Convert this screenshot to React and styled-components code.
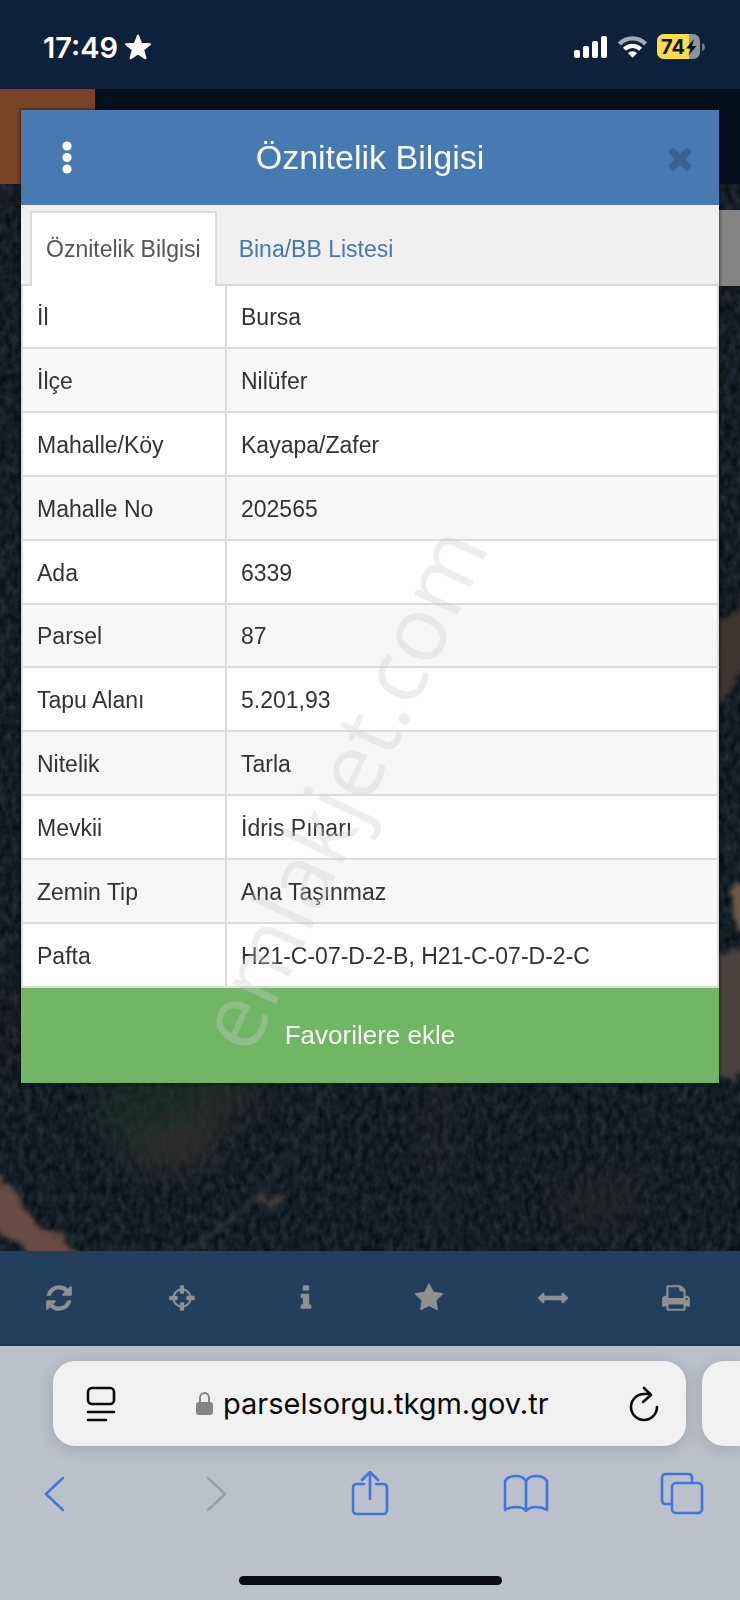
import React from 'react'
import styled, { createGlobalStyle } from 'styled-components';

const GlobalStyle = createGlobalStyle`
    * {
        box-sizing: border-box;
    }
    body {
        margin: 0;
        font-family: "Liberation Sans", Arial, sans-serif;
        font-size: 23px;
        color: #333;
        background-color: #bbc1cb;
    }
    button, input {
        font: inherit;
        color: inherit;
        border: none;
        padding: 0;
        margin: 0;
        background: none;
    }
    button {
        cursor: pointer;
    }
    svg {
        display: block;
        flex: none;
    }
`
const Page = styled.div`
    position: relative;
    min-height: 100vh;
    display: flex;
    flex-direction: column;
    overflow: hidden;
`

/* phone status bar */
const StatusBar = styled.header`
    height: 89px;
    padding: 5px 35px 0 43px;
    display: flex;
    align-items: center;
    justify-content: space-between;
    background-color: #0d223a;
    color: white;
`
const StatusGroup = styled.div`
    display: flex;
    align-items: center;
    gap: ${props => props.gap}px;
`
const Clock = styled.span`
    font-family: Inter, sans-serif;
    font-size: 29px;
    font-weight: 600;
`

/* map page behind the dialog */
const Stage = styled.main`
    flex: 1;
    display: grid;
`
const Site = styled.div`
    grid-area: 1 / 1;
    display: flex;
    flex-direction: column;
`
const SiteHeader = styled.div`
    height: 95px;
    background-color: #020f1c;
`
const MenuButton = styled.button`
    display: block;
    width: 95px;
    height: 95px;
    background-color: #7a4227;
`
const MapArea = styled.div`
    flex: 1;
    position: relative;
    background-color: #151e27;
`
const MapImage = styled.svg`
    position: absolute;
    width: 100%;
    height: 100%;
`
const LayerButton = styled.button`
    position: absolute;
    top: 26px;
    right: 0;
    width: 76px;
    height: 76px;
    background-color: #838383;
`

/* dialog */
const Dialog = styled.section`
    grid-area: 1 / 1;
    position: relative;
    align-self: start;
    margin: 21px 21px 168px;
    background-color: white;
    box-shadow: 0 0 3px 1px rgba(0, 0, 0, 0.5);
`
const DialogHeader = styled.div`
    height: 95px;
    display: flex;
    align-items: center;
    justify-content: space-between;
    background-color: #4879b0;
    color: #f5fbff;
`
const Title = styled.h1`
    margin: 0;
    font-size: 34px;
    font-weight: normal;
`
const HeaderButton = styled.button`
    width: 92px;
    height: 95px;
    padding-left: ${props => props.dim ? 14 : 0}px;
    display: flex;
    align-items: center;
    justify-content: center;
    color: ${props => props.dim ? '#3b6391' : 'white'};
`
const Tabs = styled.div`
    height: 81px;
    padding: 6px 9px 0;
    display: flex;
    background-color: #f0f0f0;
    border-bottom: 2px solid #d8d8d8;
`
const Tab = styled.button`
    height: 75px;
    padding: 0 ${props => props.active ? 14 : 20}px;
    border: 2px solid ${props => props.active ? '#dcdcdc' : 'transparent'};
    border-bottom: none;
    background-color: ${props => props.active ? 'white' : 'transparent'};
    color: ${props => props.active ? '#555' : '#4878a8'};
`
const Table = styled.table`
    width: 100%;
    height: 702px;
    border-collapse: collapse;
    border: 2px solid #dcdcdc;
    border-top: none;
`
const Row = styled.tr`
    background-color: ${props => props.shaded ? '#f7f7f7' : 'white'};
    border-bottom: 2px solid #dcdcdc;
`
const Name = styled.th`
    width: 204px;
    padding: 3px 14px 0;
    text-align: left;
    font-weight: normal;
    border-right: 2px solid #dcdcdc;
`
const Value = styled.td`
    padding: 3px 14px 0;
`
const FavoriteButton = styled.button`
    display: block;
    width: 100%;
    height: 95px;
    font-size: 26px;
    background-color: #72b566;
    color: #f6fff2;
`
const Watermark = styled.div`
    position: absolute;
    top: 677px;
    left: 318px;
    font-family: "Open Sans", sans-serif;
    font-size: 90px;
    line-height: 1;
    color: rgba(200, 205, 200, 0.35);
    transform: translate(-50%, -50%) rotate(-65deg);
    pointer-events: none;
`

/* site toolbar */
const Toolbar = styled.nav`
    height: 95px;
    padding: 0 40px 0 35px;
    display: flex;
    justify-content: space-between;
    background-color: #243f5b;
    border-bottom: 2px solid #1d3852;
`
const Tool = styled.button`
    width: 48px;
    display: flex;
    align-items: center;
    justify-content: center;
    color: #8e9192;
`

/* browser chrome */
const Browser = styled.footer`
    padding: 15px 0 16px;
    background-color: #bbc1cb;
`
const TabStrip = styled.div`
    display: grid;
    grid-template-columns: 1fr 38px;
    gap: 16px;
    padding-left: 53px;
`
const AddressBar = styled.div`
    height: 85px;
    padding: 0 27px 0 33px;
    display: flex;
    align-items: center;
    justify-content: space-between;
    border-radius: 22px;
    background-color: #f1f1f2;
    color: #0a0a0a;
    box-shadow: 0 3px 18px rgba(0, 0, 0, 0.15);
`
const NextTab = styled.div`
    border-radius: 22px 0 0 22px;
    background-color: #f1f1f2;
    box-shadow: 0 3px 18px rgba(0, 0, 0, 0.15);
`
const Address = styled.label`
    display: flex;
    align-items: center;
    gap: 10px;
`
const AddressInput = styled.input`
    width: 326px;
    font-family: Inter, sans-serif;
    font-size: 29px;
    outline: none;
`
const BrowserNav = styled.div`
    padding: 25px 34px 0 31px;
    display: flex;
    justify-content: space-between;
`
const NavButton = styled.button`
    height: 48px;
    color: ${props => props.disabled ? '#9a9da5' : '#4275dc'};
`
const HomeIndicator = styled.div`
    width: 263px;
    height: 9px;
    margin: 57px auto 0;
    border-radius: 5px;
    background-color: #0b0b12;
`

const icons = {
    refresh: 'M1639 1056q0 5-1 7-64 268-268 434.5t-478 166.5q-146 0-282.5-55t-243.5-157l-129 129q-19 19-45 19t-45-19-19-45v-448q0-26 19-45t45-19h448q26 0 45 19t19 45-19 45l-137 137q71 66 161 102t187 36q134 0 250-65t186-179q11-17 53-117 8-23 30-23h192q13 0 22.5 9.5t9.5 22.5zm25-800v448q0 26-19 45t-45 19h-448q-26 0-45-19t-19-45 19-45l138-138q-148-137-349-137-134 0-250 65t-186 179q-11 17-53 117-8 23-30 23h-199q-13 0-22.5-9.5t-9.5-22.5v-7q65-268 270-434.5t480-166.5q146 0 284 55.5t245 156.5l130-129q19-19 45-19t45 19 19 45z',
    locate: 'M1325 1024h-109q-26 0-45-19t-19-45v-128q0-26 19-45t45-19h109q-32-108-112.5-188.5t-188.5-112.5v109q0 26-19 45t-45 19h-128q-26 0-45-19t-19-45v-109q-108 32-188.5 112.5t-112.5 188.5h109q26 0 45 19t19 45v128q0 26-19 45t-45 19h-109q32 108 112.5 188.5t188.5 112.5v-109q0-26 19-45t45-19h128q26 0 45 19t19 45v109q108-32 188.5-112.5t112.5-188.5zm339-192v128q0 26-19 45t-45 19h-143q-37 161-154.5 278.5t-278.5 154.5v143q0 26-19 45t-45 19h-128q-26 0-45-19t-19-45v-143q-161-37-278.5-154.5t-154.5-278.5h-143q-26 0-45-19t-19-45v-128q0-26 19-45t45-19h143q37-161 154.5-278.5t278.5-154.5v-143q0-26 19-45t45-19h128q26 0 45 19t19 45v143q161 37 278.5 154.5t154.5 278.5h143q26 0 45 19t19 45z',
    info: 'M1216 1344v128q0 26-19 45t-45 19h-512q-26 0-45-19t-19-45v-128q0-26 19-45t45-19h64v-384h-64q-26 0-45-19t-19-45v-128q0-26 19-45t45-19h384q26 0 45 19t19 45v576h64q26 0 45 19t19 45zm-128-1152v192q0 26-19 45t-45 19h-256q-26 0-45-19t-19-45v-192q0-26 19-45t45-19h256q26 0 45 19t19 45z',
    star: 'M1728 647q0 22-26 48l-363 354 86 500q1 7 1 20 0 21-10.5 35.5t-30.5 14.5q-19 0-40-12l-449-236-449 236q-22 12-40 12-21 0-31.5-14.5t-10.5-35.5q0-6 2-20l86-500-364-354q-25-27-25-48 0-37 56-46l502-73 225-455q19-41 49-41t49 41l225 455 502 73q56 9 56 46z',
    measure: 'M1792 896q0 26-19 45l-256 256q-19 19-45 19t-45-19-19-45v-128h-1024v128q0 26-19 45t-45 19-45-19l-256-256q-19-19-19-45t19-45l256-256q19-19 45-19t45 19 19 45v128h1024v-128q0-26 19-45t45-19 45 19l256 256q19 19 19 45z',
    print: 'M448 1536h896v-256h-896v256zm0-640h896v-384h-160q-40 0-68-28t-28-68v-160h-640v640zm1152 64q0-26-19-45t-45-19-45 19-19 45 19 45 45 19 45-19 19-45zm128 0v416q0 13-9.5 22.5t-22.5 9.5h-224v160q0 40-28 68t-68 28h-960q-40 0-68-28t-28-68v-160h-224q-13 0-22.5-9.5t-9.5-22.5v-416q0-79 56.5-135.5t135.5-56.5h64v-544q0-40 28-68t68-28h672q40 0 88 20t76 48l152 152q28 28 48 76t20 88v256h64q79 0 135.5 56.5t56.5 135.5z',
    close: 'M1490 1322q0 40-28 68l-136 136q-28 28-68 28t-68-28l-294-294-294 294q-28 28-68 28t-68-28l-136-136q-28-28-28-68t28-68l294-294-294-294q-28-28-28-68t28-68l136-136q28-28 68-28t68 28l294 294 294-294q28-28 68-28t68 28l136 136q28 28 28 68t-28 68l-294 294 294 294q28 28 28 68z',
}

const tools = [
    ['refresh', 'Yenile'],
    ['locate', 'Konum'],
    ['info', 'Bilgi'],
    ['star', 'Favoriler'],
    ['measure', 'Ölçüm'],
    ['print', 'Yazdır'],
]

const attributes = [
    ['İl', 'Bursa'],
    ['İlçe', 'Nilüfer'],
    ['Mahalle/Köy', 'Kayapa/Zafer'],
    ['Mahalle No', '202565'],
    ['Ada', '6339'],
    ['Parsel', '87'],
    ['Tapu Alanı', '5.201,93'],
    ['Nitelik', 'Tarla'],
    ['Mevkii', 'İdris Pınarı'],
    ['Zemin Tip', 'Ana Taşınmaz'],
    ['Pafta', 'H21-C-07-D-2-B, H21-C-07-D-2-C'],
]

const Icon = ({ name, size = 30 }) => (
    <svg width={size} height={size} viewBox="0 0 1792 1792" fill="currentColor">
        <path d={icons[name]} />
    </svg>
)

const Signal = () => (
    <svg width="34" height="24" viewBox="0 0 34 24" fill="white">
        <rect x="0" y="15" width="6" height="8" rx="2" />
        <rect x="9" y="11" width="6" height="12" rx="2" />
        <rect x="18" y="6" width="6" height="17" rx="2" />
        <rect x="27" y="1" width="6" height="22" rx="2" />
    </svg>
)

const Wifi = () => (
    <svg width="31" height="24" viewBox="0 0 32 24" fill="none" strokeWidth="4.4">
        <path d="M2.5 8.800a19 19 0 0 1 27 0" stroke="#a3adb9" />
        <path d="M7.700 14.200a11.700 11.700 0 0 1 16.600 0" stroke="white" />
        <path d="M16 23.200l-4.800-4.900a6.800 6.800 0 0 1 9.600 0z" fill="white" />
    </svg>
)

const Battery = () => (
    <svg width="48" height="28" viewBox="0 0 48 28">
        <clipPath id="cell"><rect x="0" y="1" width="43" height="25" rx="7" /></clipPath>
        <g clipPath="url(#cell)">
            <path d="M0 0h48v28H0z" fill="#8e949c" />
            <path d="M0 0h32v28H0z" fill="#fadb4e" />
        </g>
        <path d="M45 10q3 1 3 4t-3 4z" fill="#717b88" />
        <text x="4" y="21" fontFamily="Inter, sans-serif" fontSize="20" fontWeight="700" fill="#14110a">74</text>
        <path d="M37 6l-8 9.500h4.500l-2 7 8-9.500h-4.500z" fill="#14110a" />
    </svg>
)

const SatelliteMap = () => (
    <MapImage viewBox="0 0 740 1067" preserveAspectRatio="xMidYMid slice" aria-hidden="true">
        <defs>
            <filter id="trees" x="0" y="0" width="100%" height="100%" colorInterpolationFilters="sRGB">
                <feTurbulence type="fractalNoise" baseFrequency="0.16 0.1" numOctaves="3" seed="8" />
                <feColorMatrix values="0.16 0 0 0 0  0.18 0 0 0 0.025  0.19 0 0 0 0.05  0 0 0 0 1" />
            </filter>
            <filter id="rough" x="-20%" y="-20%" width="140%" height="140%" colorInterpolationFilters="sRGB">
                <feTurbulence type="fractalNoise" baseFrequency="0.07" numOctaves="3" seed="3" />
                <feDisplacementMap in="SourceGraphic" scale="18" xChannelSelector="R" yChannelSelector="G" />
                <feGaussianBlur stdDeviation="2" />
            </filter>
            <filter id="haze" x="-30%" y="-30%" width="160%" height="160%" colorInterpolationFilters="sRGB">
                <feGaussianBlur stdDeviation="14" />
            </filter>
        </defs>
        <rect width="740" height="1067" filter="url(#trees)" />
        <g filter="url(#haze)">
            <path d="M90 905l100-20 40 30-20 60-90 10z" fill="#1c3528" opacity="0.6" />
            <path d="M130 950l80-20 10 50-70 10z" fill="#3a2f2b" opacity="0.6" />
            <path d="M200 890l80-5-40 50-30 10z" fill="#332c29" opacity="0.6" />
            <path d="M430 900l20 0-5 160-10 0z" fill="#2f2b27" opacity="0.5" />
            <path d="M560 1000l90-20-20 60-60 10z" fill="#2c2725" opacity="0.5" />
        </g>
        <g filter="url(#rough)">
            <path d="M-20 980l36 30 18 30 36 20 26 27H40l-20-26-30-22z" fill="#654b41" />
            <path d="M336 890l-30 47-32 50-18 28-58 45-60 22" fill="none" stroke="#3c3835" strokeWidth="3" opacity="0.8" />
            <path d="M256 1012l16 5 14-6" fill="none" stroke="#48403b" strokeWidth="5" />
            <path d="M715 440l40-20v60l-20 22-20 20z" fill="#40352f" />
            <path d="M700 774l60-10v130l-60-2z" fill="#4d423d" />
            <path d="M735 700h20v50h-20z" fill="#6c5a49" />
        </g>
    </MapImage>
)

const PageSettings = () => (
    <svg width="30" height="36" viewBox="0 0 30 36" fill="none" stroke="currentColor" strokeWidth="2.6" strokeLinecap="round">
        <rect x="2" y="2" width="26" height="16" rx="4" />
        <path d="M2 26h26M2 34h18" />
    </svg>
)

const Lock = () => (
    <svg width="17" height="25" viewBox="0 0 17 25">
        <path d="M4 12V7a4.500 5 0 0 1 9 0v5" fill="none" stroke="#858588" strokeWidth="2" />
        <rect x="0" y="11" width="17" height="13" rx="3" fill="#858588" />
    </svg>
)

const Reload = () => (
    <svg width="30" height="36" viewBox="0 0 30 36" fill="none" stroke="currentColor" strokeWidth="2.6" strokeLinecap="round" strokeLinejoin="round">
        <path d="M28 21A13 13 0 1 1 15 8h6" />
        <path d="M15 2l7 7-8 7" />
    </svg>
)

const NavIcon = ({ children }) => (
    <svg width="48" height="48" viewBox="0 0 48 48" fill="none" stroke="currentColor" strokeWidth="2.6" strokeLinecap="round" strokeLinejoin="round">
        {children}
    </svg>
)

const App = () => {
    return (
        <Page>
            <GlobalStyle />
            <StatusBar>
                <StatusGroup gap={6}>
                    <Clock>17:49</Clock>
                    <svg width="28" height="28" viewBox="0 0 28 28" fill="white" stroke="white" strokeWidth="2" strokeLinejoin="round">
                        <path d="M14 2.500l3.200 8.200 8.800.5-6.800 5.600 2.300 8.500L14 20.500l-7.500 4.800 2.300-8.500L2 11.200l8.800-.5z" />
                    </svg>
                </StatusGroup>
                <StatusGroup gap={9}>
                    <Signal />
                    <Wifi />
                    <Battery />
                </StatusGroup>
            </StatusBar>
            <Stage>
                <Site>
                    <SiteHeader>
                        <MenuButton aria-label="Menü" />
                    </SiteHeader>
                    <MapArea>
                        <SatelliteMap />
                        <LayerButton aria-label="Katmanlar" />
                    </MapArea>
                </Site>
                <Dialog>
                    <DialogHeader>
                        <HeaderButton aria-label="Seçenekler">
                            <svg width="10" height="34" viewBox="0 0 10 34" fill="currentColor">
                                <circle cx="5" cy="5" r="4.6" />
                                <circle cx="5" cy="16.5" r="4.6" />
                                <circle cx="5" cy="28" r="4.6" />
                            </svg>
                        </HeaderButton>
                        <Title>Öznitelik Bilgisi</Title>
                        <HeaderButton dim="true" aria-label="Kapat">
                            <Icon name="close" size={34} />
                        </HeaderButton>
                    </DialogHeader>
                    <Tabs role="tablist">
                        <Tab role="tab" aria-selected="true" active="true">Öznitelik Bilgisi</Tab>
                        <Tab role="tab" aria-selected="false">Bina/BB Listesi</Tab>
                    </Tabs>
                    <Table>
                        <tbody>
                            {attributes.map(([name, value], i) => (
                                <Row key={name} shaded={i % 2 ? 'true' : undefined}>
                                    <Name scope="row">{name}</Name>
                                    <Value>{value}</Value>
                                </Row>
                            ))}
                        </tbody>
                    </Table>
                    <FavoriteButton>Favorilere ekle</FavoriteButton>
                    <Watermark>emlakjet.com</Watermark>
                </Dialog>
            </Stage>
            <Toolbar>
                {tools.map(([name, label]) => (
                    <Tool key={name} aria-label={label}>
                        <Icon name={name} />
                    </Tool>
                ))}
            </Toolbar>
            <Browser>
                <TabStrip>
                    <AddressBar>
                        <button aria-label="Sayfa ayarları"><PageSettings /></button>
                        <Address>
                            <Lock />
                            <AddressInput type="text" aria-label="Adres" defaultValue="parselsorgu.tkgm.gov.tr" />
                        </Address>
                        <button aria-label="Yeniden yükle"><Reload /></button>
                    </AddressBar>
                    <NextTab />
                </TabStrip>
                <BrowserNav>
                    <NavButton aria-label="Geri">
                        <NavIcon><path d="M32 7L15 23l17 16" /></NavIcon>
                    </NavButton>
                    <NavButton aria-label="İleri" disabled>
                        <NavIcon><path d="M20 7l17 16-17 16" /></NavIcon>
                    </NavButton>
                    <NavButton aria-label="Paylaş">
                        <NavIcon>
                            <path d="M19 13h-7q-4 0-4 4v22q0 4 4 4h26q4 0 4-4V17q0-4-4-4h-7" />
                            <path d="M25 28V1M17 9l8-8 8 8" />
                        </NavIcon>
                    </NavButton>
                    <NavButton aria-label="Yer imleri">
                        <NavIcon>
                            <path d="M25 10q-3-5-10-5-8 0-11 5v29q5-3 11-3 7 0 10 4 3-4 10-4 6 0 11 3V10q-3-5-11-5-7 0-10 5zv30" />
                        </NavIcon>
                    </NavButton>
                    <NavButton aria-label="Sekmeler">
                        <NavIcon>
                            <rect x="14" y="12" width="30" height="30" rx="4" />
                            <path d="M14 33H8q-4 0-4-4V7q0-4 4-4h22q4 0 4 4v5" />
                        </NavIcon>
                    </NavButton>
                </BrowserNav>
                <HomeIndicator />
            </Browser>
        </Page>
    )
}

export default App
